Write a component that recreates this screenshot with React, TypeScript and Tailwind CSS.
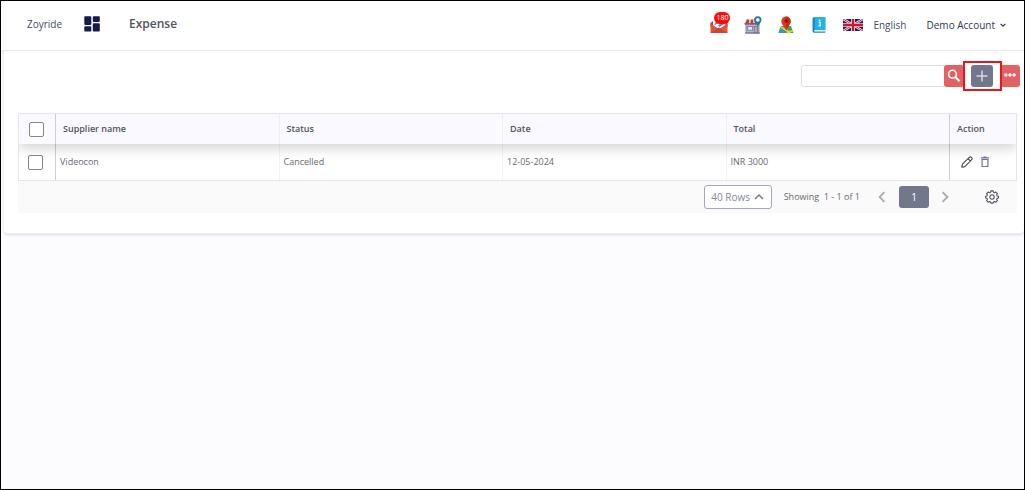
import { useState } from "react";

function DashboardIcon() {
  return (
    <svg viewBox="0 0 16 16" className="size-4" fill="#151c4b" aria-hidden="true">
      <rect x="0.3" y="0.3" width="7" height="8.6" rx="0.8" />
      <rect x="0.3" y="10.3" width="7" height="5.2" rx="0.8" />
      <rect x="8.8" y="0.3" width="7" height="5.6" rx="0.8" />
      <rect x="8.8" y="7.3" width="7" height="8.2" rx="0.8" />
    </svg>
  );
}

function MailIcon() {
  return (
    <svg viewBox="0 0 18 18" className="size-[18px]" aria-hidden="true">
      <path d="M0.5 7 9 1l8.500 6v4h-17z" fill="#b83c2b" />
      <path d="M3 4.500 14 1.500l1.500 8L9 14 3 10z" fill="#f4f6fb" />
      <path d="M4.500 9.500c0-3 2-4.500 5-4.500h4v3.500L9.500 11 8 9.500 11 7.300c-2.500-.4-4.700.2-6.500 2.200z" fill="#6f82b4" />
      <path d="M0.500 7.500 9 13l8.500-5.500V17H0.500z" fill="#db573b" />
      <path d="M0.500 17 9 11.500l8.500 5.500z" fill="#c94732" />
    </svg>
  );
}

function StoreIcon() {
  return (
    <svg viewBox="0 0 18 18" className="size-[18px]" aria-hidden="true">
      <rect x="2" y="7" width="13" height="10" fill="#b4bad6" stroke="#6a7297" strokeWidth="0.8" />
      <rect x="3.700" y="10.500" width="5" height="3.700" fill="#e1e9f3" stroke="#6a7297" strokeWidth="0.8" />
      <rect x="10.200" y="10.500" width="3.300" height="6.500" fill="#c9a583" stroke="#6a7297" strokeWidth="0.800" />
      <path d="M2 3.500h12l1.500 4H0.500z" fill="#f4c952" />
      <path d="M3 3.500h2.200L4.500 8H1.200zM7 3.500h2V8H6.500zM11 3.500h2l1 4.500h-2.800z" fill="#a63c66" />
      <path d="M0.500 7h15v.8a1.200 1.200 0 0 1-2.500 0 1.200 1.200 0 0 1-2.500 0 1.200 1.200 0 0 1-2.500 0 1.200 1.200 0 0 1-2.500 0 1.200 1.200 0 0 1-2.500 0 1.200 1.200 0 0 1-2.500 0z" fill="#92527f" />
      <path d="M1 17h15" stroke="#6a7297" />
      <path d="M13.700 10.300C11.500 7.200 10.100 5.800 10.100 3.900a3.700 3.700 0 0 1 7.400 0c0 1.900-1.600 3.300-3.800 6.400z" fill="#2479a9" />
      <circle cx="13.800" cy="3.900" r="1.800" fill="#eff9ff" />
    </svg>
  );
}

function MapIcon() {
  return (
    <svg viewBox="0 0 16 18" className="h-[18px] w-4" aria-hidden="true">
      <path d="M3 10h10l2.500 7H0.500z" fill="#39a852" />
      <path d="m.5 17 2-6 5.500 6z" fill="#2f9ad0" />
      <path d="m3 11 9.500 6M15 14.500 9 17" stroke="#f6cf48" strokeWidth="1.500" />
      <path d="M8 14.500C6.500 10 3.300 8.500 3.300 5.200a4.700 4.700 0 0 1 9.400 0C12.700 8.500 9.500 10 8 14.500z" fill="#e63525" />
      <path d="M8 14.500V.5a4.700 4.700 0 0 1 4.700 4.700C12.700 8.500 9.500 10 8 14.500z" fill="#cd2419" />
      <circle cx="8" cy="5" r="1.700" fill="#6d1d18" />
    </svg>
  );
}

function BookIcon() {
  return (
    <svg viewBox="0 0 14 16" className="h-4 w-3.5" aria-hidden="true">
      <path d="M2 0.300h11.300v13H2.500v1h10.800v1.400H2A1.700 1.700 0 0 1 .5 14V2A1.700 1.700 0 0 1 2 .3z" fill="#1c8bbd" />
      <path d="M3 .3h10.300v12.600H3z" fill="#24b4e2" />
      <path d="M2.300 13.400h10.500v1H2.300z" fill="#e9f6fa" />
      <circle cx="7.600" cy="3.300" r="0.900" fill="#fff" />
      <path d="M6.600 5.200h1.500v3.500M6.400 8.700h2.600" fill="none" stroke="#fff" strokeWidth="1.100" />
    </svg>
  );
}

function FlagIcon() {
  return (
    <svg viewBox="0 0 60 36" className="h-3 w-5" preserveAspectRatio="none" aria-hidden="true">
      <path d="M0 0h60v36H0z" fill="#1b2468" />
      <path d="m0 0 60 36M60 0 0 36" stroke="#fff" strokeWidth="7" />
      <path d="m0 0 60 36M60 0 0 36" stroke="#d51f3b" strokeWidth="3" />
      <path d="M30 0v36M0 18h60" stroke="#fff" strokeWidth="11" />
      <path d="M30 0v36M0 18h60" stroke="#d5152e" strokeWidth="7" />
    </svg>
  );
}

function Chevron({ d, className }: { d: string; className: string }) {
  return (
    <svg viewBox="0 0 10 10" className={className} fill="none" stroke="currentColor" strokeWidth="1.500" aria-hidden="true">
      <path d={d} />
    </svg>
  );
}

function SearchIcon() {
  return (
    <svg viewBox="0 0 14 14" className="size-3.5" fill="none" stroke="#fff" aria-hidden="true">
      <circle cx="5.500" cy="5.200" r="3.900" strokeWidth="1.600" />
      <path d="m8.300 8 4.300 4.300" strokeWidth="2" />
    </svg>
  );
}

function PencilIcon() {
  return (
    <svg viewBox="0 0 12 12" className="size-3" fill="none" stroke="#454a52" strokeLinejoin="round" aria-hidden="true">
      <path d="m.8 11.200.6-3L8.300 1.300a1.400 1.400 0 0 1 2 0l.4.4a1.400 1.400 0 0 1 0 2L3.800 10.600zM7 2.600 9.400 5" strokeWidth="1.100" />
    </svg>
  );
}

function TrashIcon() {
  return (
    <svg viewBox="0 0 10 12" className="h-3 w-2.5" fill="none" stroke="#73778c" aria-hidden="true">
      <path d="M2.100 3.500h5.800v7H2.100z" strokeWidth="1.200" />
      <path d="M1 1.800h8M3.500 1.200h3" strokeWidth="1.300" />
    </svg>
  );
}

function GearIcon() {
  return (
    <svg viewBox="0 0 16 16" className="size-3.5" fill="none" stroke="#4b5058" strokeWidth="1.200" strokeLinejoin="round" aria-hidden="true">
      <path d="M6.700 1h2.600l.4 1.700 1.200.5 1.500-.9 1.800 1.800-.9 1.500.5 1.200 1.700.4v1.900l-1.700.4-.5 1.200.9 1.500-1.800 1.800-1.500-.9-1.200.5L9.300 15H6.700l-.4-1.400-1.200-.5-1.500.9-1.800-1.800.9-1.500-.5-1.200L.7 9.100V7.200l1.500-.4.5-1.200-.9-1.500 1.800-1.800 1.500.9 1.200-.5z" />
      <circle cx="8" cy="8" r="2.500" />
    </svg>
  );
}

const columns = ["Supplier name", "Status", "Date", "Total"];
const rows = [["Videocon", "Cancelled", "12-05-2024", "INR 3000"]];
const box =
  "block size-[15px] appearance-none rounded-[2px] border border-[#85858a] bg-white checked:bg-[#73778c]";

export default function App() {
  const [query, setQuery] = useState("");

  return (
    <div className="flex min-h-screen flex-col border border-black bg-[#fcfcfe] font-['Open_Sans',sans-serif] text-[10px] leading-4 text-[#666a70]">
      <header className="flex h-[50px] items-center justify-between border-b border-[#ebeeee] bg-white pr-[17px] pl-[26px] text-[#45496b] shadow-sm">
        <div className="flex items-center pb-1">
          <a href="#home" className="w-[57px]">Zoyride</a>
          <a href="#dashboard" aria-label="Dashboard"><DashboardIcon /></a>
          <h1 className="ml-[29px] text-[12px] font-semibold text-[#51545c]">Expense</h1>
        </div>
        <nav className="flex items-center pb-0.5">
          <a href="#messages" aria-label="Messages" className="relative mr-4">
            <MailIcon />
            <span className="absolute -top-1 left-1 flex h-3 w-4 items-center justify-center rounded-full bg-[#fb0a0a] text-[7px] leading-none text-white">180</span>
          </a>
          <a href="#stores" aria-label="Stores" className="mr-4"><StoreIcon /></a>
          <a href="#map" aria-label="Map" className="mr-[18px]"><MapIcon /></a>
          <a href="#guide" aria-label="Guide" className="mr-[17px]"><BookIcon /></a>
          <button type="button" className="mr-5 flex items-center gap-2.5">
            <FlagIcon />
            English
          </button>
          <button type="button" className="flex items-center gap-1 font-medium text-[#30365a]">
            Demo Account
            <Chevron d="m2 3.500 3 3 3-3" className="size-2" />
          </button>
        </nav>
      </header>

      <main className="ml-[3px] rounded-b-sm border-b border-[#ececf2] bg-white pt-[14px] pb-5 shadow-sm">
        <div className="flex items-center justify-end pr-1">
          <form className="flex" onSubmit={(event) => event.preventDefault()}>
            <input
              type="search"
              aria-label="Search expenses"
              value={query}
              onChange={(event) => setQuery(event.target.value)}
              className="h-[22px] w-36 rounded-l-[3px] border border-[#dedee2] bg-white px-2 outline-none"
            />
            <button type="submit" aria-label="Search" className="-ml-px flex h-[22px] w-5 items-center justify-center rounded-[3px] bg-[#e06262]">
              <SearchIcon />
            </button>
          </form>
          <div className="relative z-10 mr-[7px] ml-[7px] flex">
            <button type="button" aria-label="Add expense" className="flex size-[22px] items-center justify-center rounded-[3px] bg-[#73778c]">
              <svg viewBox="0 0 12 12" className="size-3" stroke="#d8d9df" strokeWidth="1.500" aria-hidden="true">
                <path d="M6 .5v11M.5 6h11" />
              </svg>
            </button>
            <span className="pointer-events-none absolute -top-1 -right-[9px] -bottom-1 -left-2 border-2 border-[#e61717]" />
          </div>
          <button type="button" aria-label="More options" className="flex h-[22px] w-5 items-center justify-center rounded-[3px] bg-[#e06262]">
            <svg viewBox="0 0 12 4" className="mb-0.5 h-1 w-3" fill="#fff" aria-hidden="true">
              <circle cx="1.900" cy="2" r="1.700" />
              <circle cx="6" cy="2" r="1.700" />
              <circle cx="10.100" cy="2" r="1.700" />
            </svg>
          </button>
        </div>

        <section className="mt-[26px] mr-[7px] ml-[14px]">
          <table className="w-full table-fixed border-separate border-spacing-0 border border-[#e6e6ea] text-left">
            <colgroup>
              <col className="w-[37px]" />
              <col />
              <col />
              <col />
              <col />
              <col className="w-[66px]" />
            </colgroup>
            <thead className="relative text-[9px] text-[#50545e] shadow-[0_5px_12px_rgba(0,0,0,0.16)] [clip-path:inset(0_0_-20px_0)]">
              <tr className="h-[30px]">
                <th className="border-r border-[#cfcfd3] bg-[#faf9ff] pl-2.5">
                  <input type="checkbox" aria-label="Select all rows" className={box} />
                </th>
                {columns.map((name) => (
                  <th key={name} scope="col" className="border-r border-[#efeff3] bg-[#faf9ff] pl-[7px] font-semibold nth-[5]:border-[#cfcfd3]">
                    {name}
                  </th>
                ))}
                <th scope="col" className="bg-[#faf9ff] pl-[7px] font-semibold">Action</th>
              </tr>
            </thead>
            <tbody className="text-[9px]">
              {rows.map((row) => (
                <tr key={row[0]} className="h-9">
                  <td className="border-r border-[#cfcfd3] pl-[9px]">
                    <input type="checkbox" aria-label={`Select ${row[0]}`} className={box} />
                  </td>
                  {row.map((value) => (
                    <td key={value} className="border-r border-[#f3f3f5] pl-1 nth-[5]:border-[#cfcfd3]">{value}</td>
                  ))}
                  <td className="pl-[11px]">
                    <div className="flex items-center gap-[7px]">
                      <button type="button" aria-label="Edit"><PencilIcon /></button>
                      <button type="button" aria-label="Delete"><TrashIcon /></button>
                    </div>
                  </td>
                </tr>
              ))}
            </tbody>
          </table>

          <footer className="flex h-8 items-center justify-end bg-[#fafafa] pr-[18px]">
            <button type="button" className="flex h-6 w-[68px] items-center justify-center gap-1 rounded-[3px] border border-[#a5a7b8] bg-white text-[#85889c]">
              40 Rows
              <Chevron d="m1 7 4-4 4 4" className="size-2.5 text-[#73778c]" />
            </button>
            <p className="ml-3 text-[9px] whitespace-pre">Showing  1 - 1 of 1</p>
            <button type="button" aria-label="Previous page" className="ml-4 text-[#aaaaae]">
              <Chevron d="M7 1 3 5 7 9" className="size-3" />
            </button>
            <button type="button" className="mr-2.5 ml-[11px] h-[22px] w-[30px] rounded-[3px] bg-[#73778c] text-white">1</button>
            <button type="button" aria-label="Next page" className="text-[#aaaaae]">
              <Chevron d="m3 1 4 4-4 4" className="size-3" />
            </button>
            <button type="button" aria-label="Table settings" className="ml-[34px]"><GearIcon /></button>
          </footer>
        </section>
      </main>
    </div>
  );
}
